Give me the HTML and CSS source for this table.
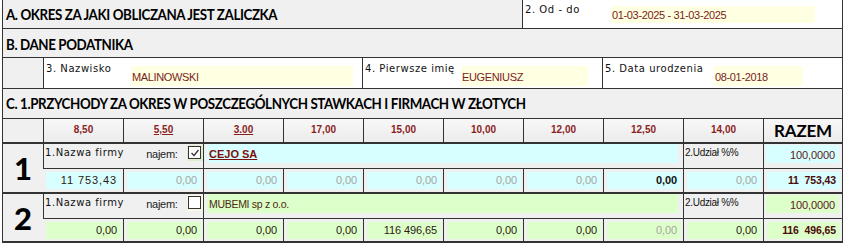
FILE: index.html
```html
<!DOCTYPE html>
<html lang="pl">
<head>
<meta charset="utf-8">
<title>Zaliczka</title>
<link rel="stylesheet" href="styles.css">
</head>
<body>
<div class="form">
  <div class="sec-a">
    <div class="sec-title sec-a-title"><span class="tt">A. OKRES ZA JAKI OBLICZANA JEST ZALICZKA</span></div>
    <div class="field field-okres">
      <span class="lbl">2. Od - do</span>
      <span class="inp yellow">01-03-2025 - 31-03-2025</span>
    </div>
  </div>
  <div class="sec-title sec-b"><span class="tt">B. DANE PODATNIKA</span></div>
  <div class="persons">
    <div class="persons-pad"></div>
    <div class="field field-nazwisko">
      <span class="lbl">3. Nazwisko</span>
      <span class="inp yellow">MALINOWSKI</span>
    </div>
    <div class="field field-imie">
      <span class="lbl">4. Pierwsze imię</span>
      <span class="inp yellow">EUGENIUSZ</span>
    </div>
    <div class="field field-data">
      <span class="lbl">5. Data urodzenia</span>
      <span class="inp yellow">08-01-2018</span>
    </div>
  </div>
  <div class="sec-title sec-c"><span class="tt">C. 1.PRZYCHODY ZA OKRES W POSZCZEGÓLNYCH STAWKACH I FIRMACH W ZŁOTYCH</span></div>

  <div class="cols hdr">
    <div class="hcell first"></div>
    <div class="hcell">8,50</div>
    <div class="hcell"><u>5,50</u></div>
    <div class="hcell"><u>3.00</u></div>
    <div class="hcell">17,00</div>
    <div class="hcell">15,00</div>
    <div class="hcell">10,00</div>
    <div class="hcell">12,00</div>
    <div class="hcell">12,50</div>
    <div class="hcell">14,00</div>
    <div class="hcell razem">RAZEM</div>
  </div>

  <div class="cols group cyan-group">
    <div class="num">1</div>
    <div class="name-lbl">
      <span class="nazwa">1.Nazwa firmy</span>
      <span class="najem">najem:</span>
      <span class="chk-wrap checked-wrap">
        <span class="chk"><svg viewBox="0 0 12 12" width="12" height="12"><polyline points="2.5,6 5,8.5 9.5,3" fill="none" stroke="#333" stroke-width="1.3"/></svg></span>
      </span>
    </div>
    <div class="name-cell"><span class="name-box firm-cejo">CEJO SA</span></div>
    <div class="udz-lbl">2.Udział %%</div>
    <div class="udz-cell"><span class="box">100,0000</span></div>

    <div class="vcell"><span class="box dark wide">11 753,43</span></div>
    <div class="vcell"><span class="box dim">0,00</span></div>
    <div class="vcell"><span class="box dim">0,00</span></div>
    <div class="vcell"><span class="box dim">0,00</span></div>
    <div class="vcell"><span class="box dim">0,00</span></div>
    <div class="vcell"><span class="box dim">0,00</span></div>
    <div class="vcell"><span class="box dim">0,00</span></div>
    <div class="vcell"><span class="box strong">0,00</span></div>
    <div class="vcell"><span class="box dim">0,00</span></div>
    <div class="vcell"><span class="box total">11&nbsp;&nbsp;753,43</span></div>
  </div>

  <div class="cols group green-group last">
    <div class="num">2</div>
    <div class="name-lbl">
      <span class="nazwa">1.Nazwa firmy</span>
      <span class="najem">najem:</span>
      <span class="chk-wrap">
        <span class="chk"></span>
      </span>
    </div>
    <div class="name-cell"><span class="name-box firm-mubemi">MUBEMI sp z o.o.</span></div>
    <div class="udz-lbl">2.Udział %%</div>
    <div class="udz-cell"><span class="box">100,0000</span></div>

    <div class="vcell"><span class="box dark">0,00</span></div>
    <div class="vcell"><span class="box dark">0,00</span></div>
    <div class="vcell"><span class="box dark">0,00</span></div>
    <div class="vcell"><span class="box dark">0,00</span></div>
    <div class="vcell"><span class="box dark">116 496,65</span></div>
    <div class="vcell"><span class="box dark">0,00</span></div>
    <div class="vcell"><span class="box dark">0,00</span></div>
    <div class="vcell"><span class="box dim">0,00</span></div>
    <div class="vcell"><span class="box dark">0,00</span></div>
    <div class="vcell"><span class="box total">116&nbsp;&nbsp;496,65</span></div>
  </div>
</div>
</body>
</html>
```

FILE: styles.css
```css
* { box-sizing: border-box; }
html, body { margin: 0; padding: 0; background: #fff; }
body { font-family: "Liberation Sans", Arial, sans-serif; }

.form {
  margin-left: 2px;
  width: 841px;
  border-left: 1px solid #333;
  border-right: 1px solid #333;
  background: #f0f0f0;
}

.sec-title {
  font-family: Lato, "Liberation Sans", sans-serif;
  font-weight: 700;
  font-size: 15px;
  line-height: 18px;
  letter-spacing: -0.45px;
  color: #000;
  padding-left: 3px;
  white-space: nowrap;
}
.sec-title .tt {
  display: inline-block;
  transform: scaleX(0.89);
  transform-origin: left center;
}

/* section A */
.sec-a {
  display: flex;
  height: 29px;
  border-bottom: 1px solid #333;
}
.sec-a-title {
  width: 519px;
  padding-top: 5px;
}
.field {
  display: flex;
  background: #fff;
  border-left: 1px solid #333;
}
.field-okres { flex: 1; padding-top: 2px; padding-left: 2px; }
.lbl {
  font-family: "DejaVu Sans", sans-serif;
  font-size: 10px;
  color: #111;
  letter-spacing: 0.55px;
  white-space: nowrap;
}
.inp {
  display: block;
  font-family: "Liberation Sans", sans-serif;
  font-size: 11px;
  letter-spacing: -0.35px;
  color: #7a1d1d;
  padding: 3px 0 0 1px;
}
.yellow { background: #ffffe1; }

.field-okres .lbl { width: 86px; padding-top: 2px; }
.field-okres .inp { width: 204px; height: 17px; margin-top: 4px; }

/* section B */
.sec-b {
  height: 29px;
  padding-top: 6px;
  border-bottom: 1px solid #333;
}
.persons {
  display: flex;
  height: 31px;
  border-bottom: 1px solid #333;
}
.persons-pad { width: 40px; }
.persons .field { padding: 5px 0 0 2px; }
.persons .inp { height: 20px; margin-top: 3px; padding-top: 5px; }
.field-nazwisko { width: 319px; }
.field-nazwisko .lbl { width: 85px; }
.field-nazwisko .inp { width: 222px; }
.field-imie { width: 240px; }
.field-imie .lbl { width: 96px; }
.field-imie .inp { width: 127px; }
.field-data { width: 240px; }
.field-data .lbl { width: 109px; }
.field-data .inp { width: 89px; }

/* section C */
.sec-c {
  height: 30px;
  padding-top: 5px;
  border-bottom: 1px solid #333;
}

/* grid */
.cols {
  display: grid;
  grid-template-columns: 40px repeat(9, 80px) 79px;
}
.hdr {
  height: 25px;
  border-bottom: 2px solid #333;
}
.hcell {
  border-left: 1px solid #333;
  background: linear-gradient(#f7f7f7, #ececec);
  font-size: 10px;
  font-weight: 700;
  color: #8a1e1e;
  text-align: center;
  padding-top: 5px;
}
.hcell.first { border-left: none; background: #f0f0f0; }
.hcell.razem {
  font-family: Lato, "Liberation Sans", sans-serif;
  font-size: 17px;
  line-height: 20px;
  color: #000;
  padding-top: 2px;
  letter-spacing: -0.2px;
}

.group {
  grid-template-rows: 25px 23px;
  border-bottom: 2px solid #333;
}
.group.last { grid-template-rows: 25px 22px; }
.num {
  grid-row: 1 / span 2;
  font-family: Lato, "Liberation Sans", sans-serif;
  font-weight: 900;
  font-size: 31px;
  text-align: center;
  padding-top: 5px;
  color: #000;
}
.name-lbl {
  grid-column: 2 / span 2;
  border-left: 1px solid #333;
  border-bottom: 1px solid #333;
  display: flex;
  align-items: flex-start;
  padding-left: 1px;
}
.nazwa {
  font-family: "DejaVu Sans", sans-serif;
  font-size: 10px;
  letter-spacing: 0.55px;
  color: #111;
  padding-top: 3px;
  width: 102px;
  white-space: nowrap;
}
.najem {
  font-size: 11px;
  letter-spacing: -0.3px;
  color: #222;
  padding-top: 4px;
  width: 41px;
  white-space: nowrap;
}
.chk-wrap {
  margin-top: 1px;
  width: 16px;
  height: 16px;
  padding: 1px 2px 1px 1px;
  background: #f8f8e6;
}
.checked-wrap { background: #dcefcf; }
.chk {
  display: block;
  width: 13px;
  height: 13px;
  border: 1px solid #333;
  background: #fff;
}
.chk svg { display: block; margin: -0.5px; }

.name-cell {
  grid-column: 4 / span 6;
  border-left: 1px solid #333;
  border-bottom: 1px solid #333;
  padding: 0 5px 0 3px;
}
.name-box {
  display: block;
  height: 19px;
  font-size: 11px;
  padding: 4px 0 0 2px;
}
.firm-cejo {
  font-weight: 700;
  text-decoration: underline;
  color: #7a1010;
}
.firm-mubemi {
  font-size: 10.5px;
  letter-spacing: -0.3px;
  color: #4a2a10;
}
.udz-lbl {
  border-left: 1px solid #333;
  border-bottom: 1px solid #333;
  font-size: 10px;
  letter-spacing: -0.3px;
  color: #111;
  padding: 3px 0 0 1px;
}
.udz-cell {
  border-left: 1px solid #333;
  border-bottom: 1px solid #333;
  padding: 1px 3px 0 2px;
}
.udz-cell .box { margin: 0; height: 18px; padding-top: 4px; color: #5a2020; }

.vcell {
  border-left: 1px solid #333;
  padding: 3px 2px 0 3px;
}
.vcell:nth-child(6) { border-left: none; }
.box {
  display: block;
  height: 17px;
  font-size: 11px;
  text-align: right;
  padding: 2px 4px 0 0;
  letter-spacing: -0.1px;
}
.cyan-group .name-box,
.cyan-group .box { background: #d8ffff; }
.green-group .name-box,
.green-group .box { background: #ddffc9; }
.dark { color: #2a1a10; }
.wide { letter-spacing: 0.9px; }
.dim { color: #a6a6a6; }
.strong { font-weight: 700; color: #111; }
.total { font-weight: 700; color: #4a0a0a; font-size: 10.5px; }
```
